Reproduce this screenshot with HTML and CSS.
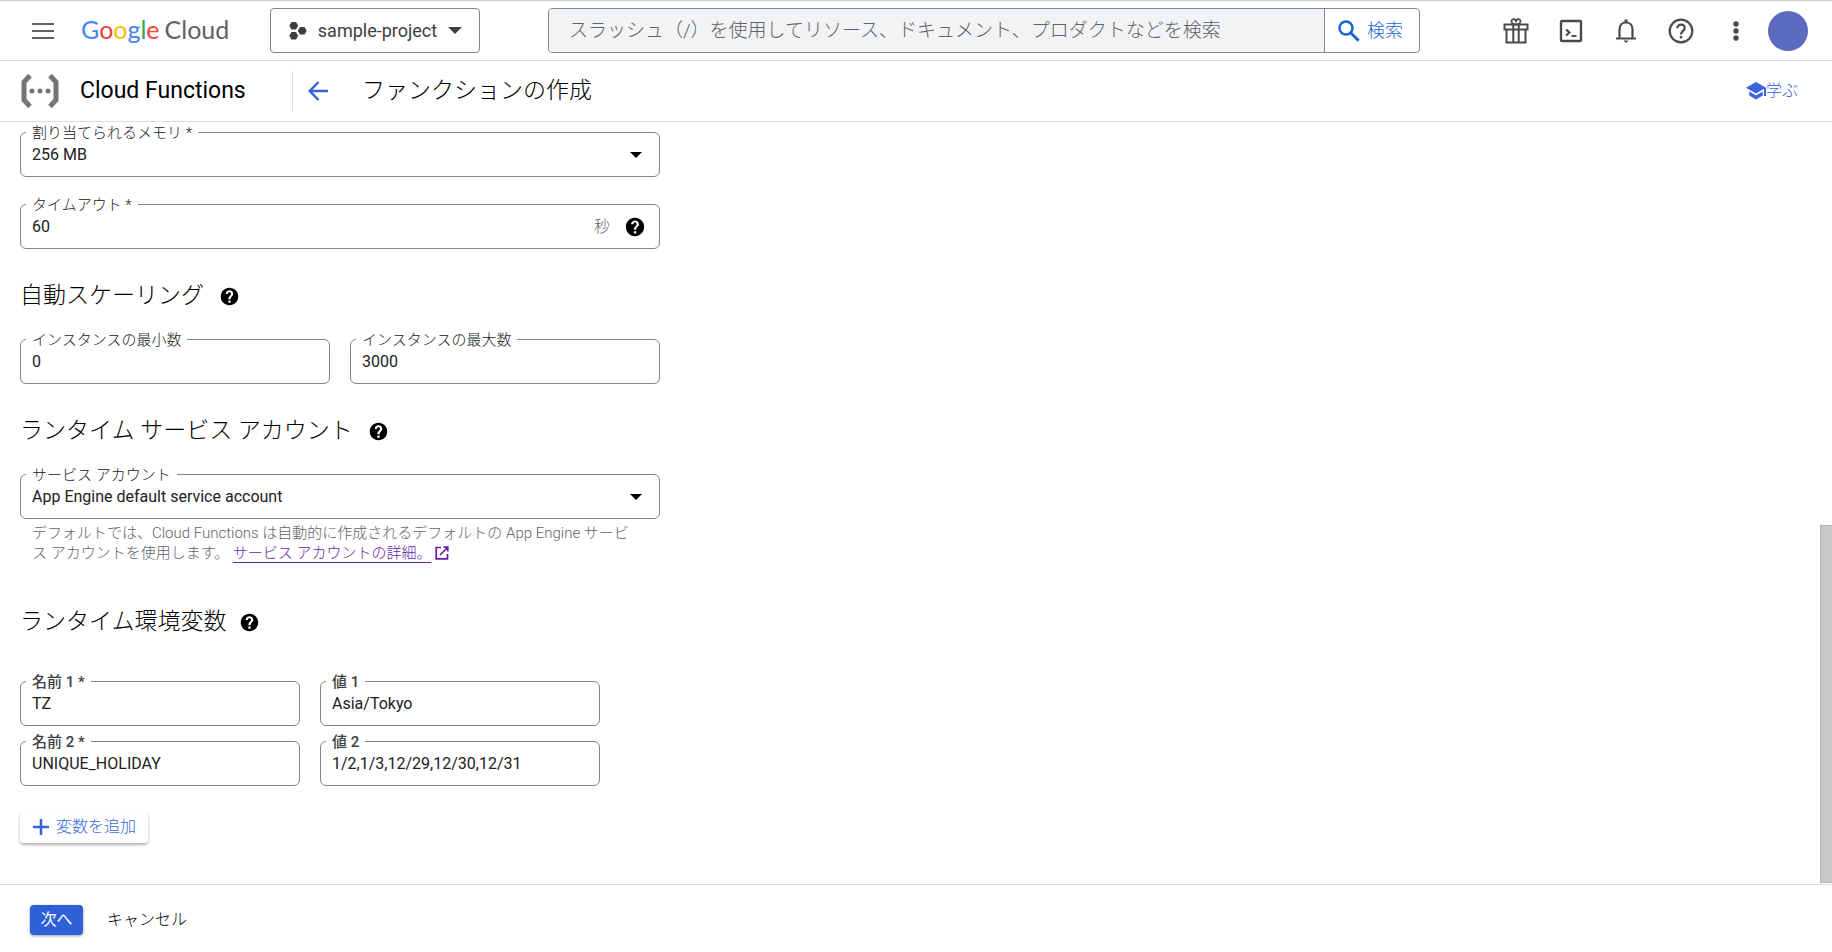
FILE: index.html
```html
<!DOCTYPE html>
<html lang="ja">
<head>
<meta charset="utf-8">
<title>ファンクションの作成 – Cloud Functions</title>
<link rel="stylesheet" href="styles.css">
</head>
<body>
<svg class="sprite" aria-hidden="true">
  <symbol id="help" viewBox="0 0 24 24"><path d="M12 2C6.480 2 2 6.480 2 12s4.480 10 10 10 10-4.480 10-10S17.520 2 12 2zm1.300 17h-2.600v-2.500h2.600V19zm2.070-7.750l-.9.920C13.750 12.900 13.300 13.500 13.300 15h-2.600v-.5c0-1.100.45-2.100 1.170-2.830l1.240-1.260c.37-.36.59-.86.59-1.410 0-1.100-.6-1.800-1.700-1.800s-1.800.7-1.800 1.800H7.700c0-2.300 1.900-4.200 4.300-4.200s4.300 1.900 4.300 4.200c0 .88-.36 1.680-.93 2.250z"/></symbol>
  <symbol id="caret" viewBox="0 0 12 6"><path d="M0 0h12L6 6z"/></symbol>
</svg>

<header class="topbar">
  <button class="icon-btn menu" aria-label="メニュー">
    <svg width="22" height="16" viewBox="0 0 22 16" fill="none" stroke="#5f6368" stroke-width="2"><path d="M0 1h22M0 8h22M0 15h22"/></svg>
  </button>
  <a class="logo" href="#" aria-label="Google Cloud"><span class="google"><span class="b">G</span><span class="r">o</span><span class="y">o</span><span class="b">g</span><span class="g">l</span><span class="r">e</span></span><span>Cloud</span></a>
  <button class="project">
    <svg width="18" height="20" viewBox="0 0 18 20" fill="#3c4043"><path d="M2.500 1h4.500l2.200 3.700L7 8.500H2.500L.3 4.700zM2.500 11h4.500l2.200 3.800L7 18.600H2.500L.3 14.800zM11 6h4.500l2.200 3.800-2.200 3.800H11L8.800 9.800z"/></svg>
    <span>sample-project</span>
    <svg width="14" height="7" viewBox="0 0 12 6" fill="#3c4043"><use href="#caret"/></svg>
  </button>
  <form class="search">
    <input type="search" aria-label="検索" placeholder="スラッシュ（/）を使用してリソース、ドキュメント、プロダクトなどを検索">
    <button type="button">
      <svg width="22" height="22" viewBox="0 0 22 22" fill="none" stroke="#1967d2"><circle cx="8" cy="8" r="6.500" stroke-width="2.500"/><path d="M12.700 12.700l8 8" stroke-width="3"/></svg>
      検索
    </button>
  </form>
  <nav class="tools">
    <button class="icon-btn" aria-label="特典"><svg width="26" height="28" viewBox="0 0 26 28" fill="none" stroke="#4a4a4a" stroke-width="2"><path d="M1.500 7.500h23v5h-23zM3.500 12.500h19v13h-19zM10.300 7.500v18M15.700 7.500v18"/><path d="M13 7.500C11 7.500 8.500 6.300 8.500 4.300c0-3 4.500-3 4.500.9 0-3.900 4.500-3.900 4.500-.9 0 2-2.500 3.200-4.500 3.200z" stroke-width="1.800"/></svg></button>
    <button class="icon-btn" aria-label="Cloud Shell"><svg width="24" height="24" viewBox="0 0 24 24" fill="none" stroke="#4a4a4a" stroke-width="2.400"><rect x="2" y="2" width="20" height="20" rx="1"/><path d="M7 10.500l3.500 3-3.500 3M12.500 17h5" stroke-width="2.200"/></svg></button>
    <button class="icon-btn" aria-label="通知"><svg width="22" height="26" viewBox="0 0 22 26" fill="none" stroke="#4a4a4a" stroke-width="2.200"><path d="M4.500 20v-8.500c0-4 2.500-7 6.500-7s6.500 3 6.500 7V20M1 20.500h20"/><path d="M9.500 1.500h3v3h-3zM8.500 22.500h5L11 25z" fill="#4a4a4a" stroke="none"/></svg></button>
    <button class="icon-btn" aria-label="ヘルプ"><svg width="26" height="26" viewBox="0 0 26 26" fill="none" stroke="#4a4a4a" stroke-width="2.200"><circle cx="13" cy="13" r="11.300"/><path d="M9.300 10.300c0-2 1.500-3.600 3.700-3.600s3.700 1.500 3.700 3.500c0 2.600-3.700 3-3.700 6.300"/><path d="M13 18v2.400" stroke-width="2.400"/></svg></button>
    <button class="icon-btn" aria-label="その他"><svg width="6" height="20" viewBox="0 0 6 20" fill="#4a4a4a"><circle cx="3" cy="3" r="2.700"/><circle cx="3" cy="10" r="2.700"/><circle cx="3" cy="17" r="2.700"/></svg></button>
    <button class="avatar" aria-label="アカウント"></button>
  </nav>
</header>

<div class="pagebar">
  <svg class="product-icon" width="40" height="34" viewBox="0 0 40 34" fill="none" stroke="#757575" stroke-width="5"><path d="M10 1.500L4 8v18l6 6.500M30 1.500L36 8v18l-6 6.500"/><g fill="#757575" stroke="none"><circle cx="12" cy="17" r="2.500"/><circle cx="20" cy="17" r="2.500"/><circle cx="28" cy="17" r="2.500"/></g></svg>
  <span class="product">Cloud Functions</span>
  <div class="title-group">
    <button class="icon-btn" aria-label="戻る"><svg width="20" height="20" viewBox="0 0 20 20" fill="none" stroke="#3367d6" stroke-width="2.500"><path d="M20 10H2M10.500 1L1.800 10l8.700 9"/></svg></button>
    <h1>ファンクションの作成</h1>
  </div>
  <a class="learn" href="#"><svg width="20" height="18" viewBox="0 0 20 18" fill="#3b62d9"><path d="M10 0L0 5.700l10 5.700 8-4.600V14h2V5.700z"/><path d="M3.300 9.600v4L10 17.400l6.700-3.800v-4L10 13.400z"/></svg>学ぶ</a>
</div>

<main class="content">
  <form class="settings">
    <div class="field">
      <label for="memory">割り当てられるメモリ *</label>
      <select id="memory"><option>256 MB</option></select>
      <span class="suffix"><svg class="arrow" width="12" height="6"><use href="#caret"/></svg></span>
    </div>
    <div class="field">
      <label for="timeout">タイムアウト *</label>
      <input id="timeout" type="text" value="60">
      <span class="suffix">秒<svg width="22" height="22"><use href="#help"/></svg></span>
    </div>

    <h2>自動スケーリング<svg width="21" height="21"><use href="#help"/></svg></h2>
    <div class="row">
      <div class="field"><label for="min">インスタンスの最小数</label><input id="min" type="text" value="0"></div>
      <div class="field"><label for="max">インスタンスの最大数</label><input id="max" type="text" value="3000"></div>
    </div>

    <h2>ランタイム サービス アカウント<svg width="21" height="21"><use href="#help"/></svg></h2>
    <div class="field">
      <label for="account">サービス アカウント</label>
      <select id="account"><option>App Engine default service account</option></select>
      <span class="suffix"><svg class="arrow" width="12" height="6"><use href="#caret"/></svg></span>
    </div>
    <p class="hint">デフォルトでは、Cloud Functions は自動的に作成されるデフォルトの App Engine サービス アカウントを使用します。 <a href="#">サービス アカウントの詳細。<svg width="14" height="14" viewBox="0 0 14 14" fill="none" stroke="#681da8" stroke-width="1.700"><path d="M6 1.500H1.200v11.300h11.300V8M8.500 1.200h4.300v4.300M12.500 1.500L5 9"/></svg></a></p>

    <h2 class="env-title">ランタイム環境変数<svg width="21" height="21"><use href="#help"/></svg></h2>
    <div class="env">
      <div class="field"><label for="n1">名前 1 *</label><input id="n1" type="text" value="TZ"></div>
      <div class="field"><label for="v1">値 1</label><input id="v1" type="text" value="Asia/Tokyo"></div>
      <div class="field"><label for="n2">名前 2 *</label><input id="n2" type="text" value="UNIQUE_HOLIDAY"></div>
      <div class="field"><label for="v2">値 2</label><input id="v2" type="text" value="1/2,1/3,12/29,12/30,12/31"></div>
    </div>
    <button type="button" class="add"><svg width="16" height="16" viewBox="0 0 16 16" fill="none" stroke="#3367d6" stroke-width="2.500"><path d="M8 0v16M0 8h16"/></svg>変数を追加</button>
  </form>
  <div class="scroll-rail"><div class="thumb"></div></div>
</main>

<footer class="actions">
  <button class="next">次へ</button>
  <button class="cancel">キャンセル</button>
</footer>
</body>
</html>
```
FILE: styles.css
```css
* { box-sizing: border-box; }

body {
  margin: 0;
  min-height: 100vh;
  display: flex;
  flex-direction: column;
  background: #fff;
  color: #000;
  font: 16px/20px Roboto, "Noto Sans CJK JP", sans-serif;
  font-weight: 300;
}

button, input, select { font: inherit; color: inherit; }
button { border: 0; padding: 0; background: none; }
a { text-decoration: none; }
svg { display: block; flex: none; }
.sprite { position: absolute; width: 0; height: 0; }
.icon-btn { display: flex; align-items: center; justify-content: center; }

/* Top bar */
.topbar {
  display: flex;
  align-items: center;
  height: 61px;
  padding: 0 24px 0 32px;
  border-top: 1px solid #ccc;
  border-bottom: 1px solid #dadce0;
}
.logo {
  display: flex;
  gap: 5px;
  margin-left: 27px;
  width: 162px;
  padding-bottom: 3px;
  font: 25px/32px Lato, sans-serif;
  color: #5f6368;
}
.b { color: #4285f4; }
.r { color: #ea4335; }
.y { color: #fbbc04; }
.g { color: #34a853; }
.project {
  display: flex;
  align-items: center;
  justify-content: space-between;
  width: 210px;
  height: 45px;
  margin-left: 27px;
  padding: 0 17px 0 18px;
  border: 1px solid #80868b;
  border-radius: 4px;
  font-size: 18px;
  font-weight: 400;
  white-space: nowrap;
  color: #3c4043;
}
.search {
  display: flex;
  flex: 0 1 872px;
  height: 45px;
  margin: 0 auto 0 68px;
  border: 1px solid #80868b;
  border-radius: 4px;
  overflow: hidden;
}
.search input {
  flex: 1;
  min-width: 0;
  border: 0;
  padding: 0 20px;
  background: #f1f3f4;
  font-size: 19px;
}
.search input::placeholder { color: #5f6368; opacity: 1; }
.search button {
  display: flex;
  align-items: center;
  gap: 7px;
  width: 95px;
  padding-left: 13px;
  border-left: 1px solid #80868b;
  font-size: 18px;
  color: #1967d2;
}
.tools { display: flex; align-items: center; }
.tools .icon-btn { width: 55px; height: 40px; }
.avatar { width: 40px; height: 40px; margin-left: 5px; border-radius: 50%; background: #5c6bc0; }

/* Page bar */
.pagebar {
  display: flex;
  align-items: center;
  height: 61px;
  padding: 0 34px 0 20px;
  border-bottom: 1px solid #dadce0;
}
.product { margin-left: 20px; width: 212px; font-size: 23px; font-weight: 400; line-height: 28px; }
.title-group {
  display: flex;
  align-items: center;
  gap: 34px;
  height: 40px;
  padding-left: 15px;
  border-left: 1px solid #dadce0;
}
h1, h2 { margin: 0; font-size: 23px; line-height: 28px; font-weight: 300; }
.learn { display: flex; align-items: center; margin-left: auto; color: #3b62d9; }

/* Form */
.content { display: flex; flex: 1; justify-content: space-between; }
.settings { width: 660px; padding: 10px 0 0 20px; }
.field { position: relative; }
.field > input, .field > select {
  display: block;
  width: 100%;
  height: 45px;
  padding: 0 11px;
  border: 1px solid #80868b;
  border-radius: 6px;
  background: #fff;
  appearance: none;
  font-weight: 400;
  color: #202124;
}
.field > label {
  position: absolute;
  left: 6px;
  top: -9px;
  padding: 0 6px;
  background: #fff;
  font-size: 15px;
  color: #202124;
}
.field + .field { margin-top: 27px; }
.suffix {
  position: absolute;
  top: 0;
  right: 14px;
  height: 45px;
  display: flex;
  align-items: center;
  gap: 14px;
  color: #5f6368;
}
.suffix svg { fill: #000; }
.arrow { margin-right: 4px; }
h2 { display: flex; align-items: center; gap: 15px; margin: 33px 0 29px; }
.row { display: grid; grid-template-columns: 1fr 1fr; gap: 20px; }
.row .field, .env .field { margin: 0; }
.hint { margin: 4px 0 0; padding: 0 20px 0 12px; font-size: 15px; color: #5f6368; }
.hint a {
  color: #681da8;
  text-decoration: underline 1px;
  text-underline-offset: 4px;
  text-decoration-skip-ink: none;
}
.hint svg { display: inline-block; margin-left: 4px; vertical-align: -2px; }
.env-title { gap: 12px; margin: 45px 0; }
.env {
  display: grid;
  grid-template-columns: 280px 280px;
  gap: 15px 20px;
}
.env .field > label { font-weight: 500; color: #3c4043; }
.add {
  display: flex;
  align-items: center;
  gap: 7px;
  height: 32px;
  margin-top: 25px;
  padding: 0 12px 0 13px;
  border-radius: 4px;
  box-shadow: 0 2px 3px rgba(60, 64, 67, .4);
  color: #3367d6;
}
.scroll-rail { display: grid; grid-template-rows: 53fr 47fr; width: 12px; padding-bottom: 1px; }
.thumb { grid-row: 2; background: #c9c9c9; border: 1px solid #b3b3b3; border-right: 0; }

/* Footer */
.actions {
  display: flex;
  align-items: center;
  gap: 24px;
  height: 68px;
  padding: 2px 30px 0;
  border-top: 1px solid #dadce0;
}
.next {
  width: 53px;
  height: 30px;
  border-radius: 4px;
  background: #3060d8;
  box-shadow: 0 1px 3px rgba(60, 64, 67, .5);
  color: #fff;
  font-weight: 400;
}
```
